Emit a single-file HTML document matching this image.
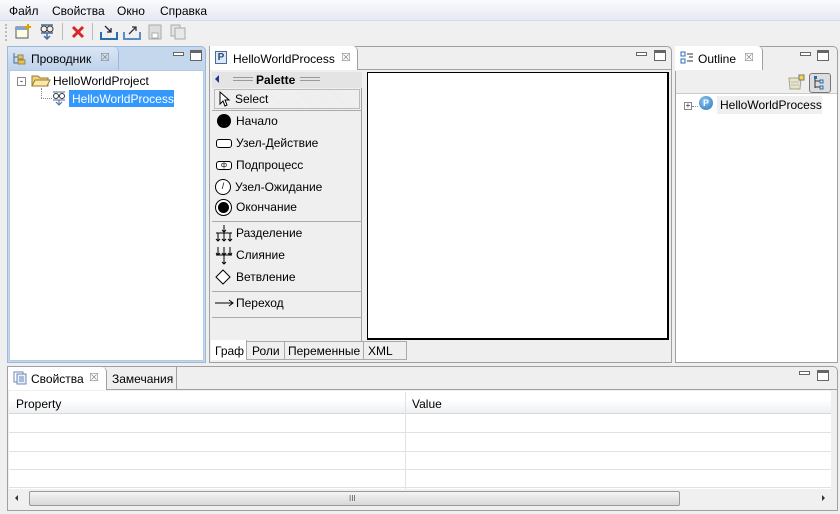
<!DOCTYPE html>
<html><head><meta charset="utf-8">
<style>
*{box-sizing:border-box;margin:0;padding:0}
body{width:840px;height:514px;background:#efefef;font-family:"Liberation Sans","DejaVu Sans",sans-serif;font-size:12px;color:#000;position:relative;overflow:hidden}
.a{position:absolute}
.menu{left:0;top:0;width:840px;height:21px;background:linear-gradient(#fafbfd,#e6e9f2);border-bottom:1px solid #d8dce6}
.menu span{position:absolute;top:4px}
.tb{left:0;top:21px;width:840px;height:22px;background:#f0f0f0}
.panel{border:1px solid #a0a0a0;border-radius:0 5px 0 0;background:#efefef}
.tab{background:#fff;border:1px solid #a0a0a0;border-bottom:none;border-radius:0 5px 0 0;height:24px;padding:5px 0 0 0}
.min{width:11px;height:4px;border:1px solid #666;background:#fff}
.max{width:12px;height:11px;border:1px solid #666;border-top-width:3px;background:#fff}
.x{color:#888;font-size:11px}
.pal div{position:absolute;left:4px}
.row{position:absolute;left:1px;width:828px;height:1px;background:#e2e2e2}
</style></head><body>
<div class="a menu"><span style="left:9px">Файл</span><span style="left:52px">Свойства</span><span style="left:117px">Окно</span><span style="left:160px">Справка</span></div>
<div class="a tb">
 <div class="a" style="left:5px;top:3px;width:2px;height:17px;border-left:2px dotted #bbb"></div>
 <svg class="a" style="left:14px;top:2px" width="20" height="18"><rect x="2" y="4" width="12" height="11" fill="#fffbe0" stroke="#556"/><rect x="2" y="4" width="12" height="3" fill="#7aa6d8"/><path d="M14 1v6M11 4h6" stroke="#e0a000" stroke-width="2"/></svg>
 <svg class="a" style="left:39px;top:2px" width="16" height="18"><circle cx="5" cy="6" r="3" fill="none" stroke="#333"/><circle cx="11" cy="6" r="3" fill="none" stroke="#333"/><path d="M2 2h12M2 10h12M8 10v5M5 13l3 3 3-3" stroke="#4a6a9a" stroke-width="1.5" fill="none"/></svg>
 <div class="a" style="left:62px;top:2px;width:1px;height:17px;background:#bbb"></div>
 <svg class="a" style="left:71px;top:4px" width="14" height="14"><path d="M2 2l10 10M12 2L2 12" stroke="#d8262a" stroke-width="3"/></svg>
 <div class="a" style="left:92px;top:2px;width:1px;height:17px;background:#bbb"></div>
 <svg class="a" style="left:100px;top:3px" width="18" height="16"><path d="M1 8v7h16V8" fill="none" stroke="#2a6cb0" stroke-width="2"/><path d="M5 2l6 6M11 4v4H7" stroke="#224" fill="none" stroke-width="1.3"/></svg>
 <svg class="a" style="left:123px;top:3px" width="18" height="16"><path d="M1 8v7h16V8" fill="none" stroke="#5a8cc8" stroke-width="2"/><path d="M6 10l7-7M9 3h4v4" stroke="#334" fill="none" stroke-width="1.3"/></svg>
 <svg class="a" style="left:147px;top:3px" width="16" height="16"><rect x="2" y="1" width="12" height="14" fill="#ddd" stroke="#aaa"/><rect x="5" y="9" width="6" height="5" fill="#fff" stroke="#aaa"/></svg>
 <svg class="a" style="left:170px;top:3px" width="16" height="16"><rect x="1" y="1" width="9" height="11" fill="#e4e4e4" stroke="#aaa"/><rect x="5" y="4" width="10" height="11" fill="#e8e8e8" stroke="#aaa"/></svg>
</div>

<!-- left panel -->
<div class="a" style="left:7px;top:46px;width:199px;height:317px;border:1px solid #9db8d8;border-radius:0 5px 0 0;background:#c5d7ec"></div>
<div class="a" style="left:8px;top:47px;width:111px;height:23px;background:linear-gradient(#d9e6f5,#c0d3eb);border-right:1px solid #9db8d8;border-radius:0 5px 0 0"></div>
<svg class="a" style="left:12px;top:52px" width="16" height="14"><path d="M2 1v10h4M2 5h4" stroke="#4a6a9a" fill="none"/><rect x="6" y="3" width="5" height="4" fill="#f0c040" stroke="#886"/><rect x="6" y="8" width="7" height="4" fill="#f0c040" stroke="#886"/></svg>
<div class="a" style="left:31px;top:52px">Проводник</div>
<div class="a x" style="left:100px;top:51px">&#x2612;</div>
<div class="a min" style="left:173px;top:52px"></div><div class="a max" style="left:190px;top:50px"></div>
<div class="a" style="left:9px;top:70px;width:195px;height:291px;background:#fff;border:1px solid #b4cae4"></div>
<div class="a" style="left:17px;top:77px;width:9px;height:9px;border:1px solid #888;background:#fff;font-size:9px;line-height:6px;text-align:center">-</div>
<svg class="a" style="left:31px;top:73px" width="20" height="14"><path d="M1 3h6l2 2h8v8H1z" fill="#f2d27a" stroke="#997a30"/><path d="M4 7h15l-3 6H1z" fill="#fbe8a8" stroke="#997a30"/></svg>
<div class="a" style="left:53px;top:74px">HelloWorldProject</div>
<div class="a" style="left:41px;top:88px;width:1px;height:10px;border-left:1px dotted #888"></div>
<div class="a" style="left:41px;top:98px;width:11px;border-top:1px dotted #888"></div>
<svg class="a" style="left:52px;top:91px" width="14" height="15"><circle cx="4" cy="5" r="2.5" fill="none" stroke="#333"/><circle cx="10" cy="5" r="2.5" fill="none" stroke="#333"/><path d="M1 1h12M1 9h12M7 9v4M4 11l3 3 3-3" stroke="#4a6a9a" fill="none"/></svg>
<div class="a" style="left:69px;top:90px;width:105px;height:17px;background:#3399ff"></div>
<div class="a" style="left:72px;top:92px;color:#fff">HelloWorldProcess</div>

<!-- editor -->
<div class="a panel" style="left:209px;top:46px;width:463px;height:317px"></div>
<div class="a" style="left:210px;top:69px;width:461px;height:1px;background:#a0a0a0"></div>
<div class="a tab" style="left:210px;top:46px;width:148px;border-left:none;border-top:none;height:24px"></div>
<div class="a" style="left:215px;top:51px;width:12px;height:13px;border:1px solid #4a6a9a;background:#dde8f5;font-size:10px;font-weight:bold;color:#2a4a7a;text-align:center;line-height:11px">P</div>
<div class="a" style="left:233px;top:52px">HelloWorldProcess</div>
<div class="a x" style="left:341px;top:51px">&#x2612;</div>
<div class="a min" style="left:636px;top:52px"></div><div class="a max" style="left:654px;top:50px"></div>
<!-- palette -->
<div class="a" style="left:212px;top:72px;width:150px;height:269px;background:#efefef;border-right:1px solid #a0a0a0"></div>
<div class="a" style="left:212px;top:72px;width:150px;height:16px;background:#e4e4e4"></div>
<div class="a" style="left:215px;top:75px;width:0;height:0;border:4px solid transparent;border-right:4px solid #1a3a8a;border-left:none"></div>
<div class="a" style="left:233px;top:77px;width:20px;height:4px;border-top:1px solid #999;border-bottom:1px solid #999"></div>
<div class="a" style="left:256px;top:73px;font-weight:bold">Palette</div>
<div class="a" style="left:300px;top:77px;width:20px;height:4px;border-top:1px solid #999;border-bottom:1px solid #999"></div>
<div class="a" style="left:214px;top:89px;width:146px;height:20px;border:1px solid #bbb;background:repeating-linear-gradient(45deg,#eaeaea 0 1px,#f4f4f4 1px 2px)"></div>
<svg class="a" style="left:219px;top:91px" width="12" height="16"><path d="M1 1v12l3-3 2 5 2-1-2-5h4z" fill="#fff" stroke="#000"/></svg>
<div class="a" style="left:235px;top:92px">Select</div>
<div class="a" style="left:212px;top:110px;width:150px;height:1px;background:#aaa"></div>
<div class="a" style="left:217px;top:114px;width:14px;height:14px;border-radius:50%;background:#000"></div>
<div class="a" style="left:236px;top:114px">Начало</div>
<div class="a" style="left:216px;top:139px;width:16px;height:9px;border:1px solid #000;border-radius:3px;background:#fff"></div>
<div class="a" style="left:236px;top:136px">Узел-Действие</div>
<div class="a" style="left:216px;top:161px;width:16px;height:9px;border:1px solid #000;border-radius:3px;background:#fff;font-size:7px;line-height:7px;text-align:center">ф</div>
<div class="a" style="left:236px;top:158px">Подпроцесс</div>
<div class="a" style="left:215px;top:179px;width:16px;height:16px;border:1px solid #000;border-radius:50%;background:#fff;font-size:9px;line-height:13px;text-align:center">/</div>
<div class="a" style="left:235px;top:180px">Узел-Ожидание</div>
<div class="a" style="left:215px;top:199px;width:17px;height:17px;border:1px solid #000;border-radius:50%;background:#fff"></div>
<div class="a" style="left:218px;top:202px;width:11px;height:11px;border-radius:50%;background:#000"></div>
<div class="a" style="left:236px;top:200px">Окончание</div>
<div class="a" style="left:212px;top:221px;width:150px;height:1px;background:#aaa"></div>
<svg class="a" style="left:215px;top:224px" width="18" height="20"><path d="M9 1v8M1 9h16M3 9v8M9 9v8M15 9v8M1 15l2 2 2-2M7 15l2 2 2-2M13 15l2 2 2-2M7 6l2 2 2-2" stroke="#000" fill="none"/></svg>
<div class="a" style="left:236px;top:226px">Разделение</div>
<svg class="a" style="left:215px;top:246px" width="18" height="20"><path d="M3 1v8M9 1v8M15 1v8M1 9h16M9 9v9M1 7l2 2 2-2M7 7l2 2 2-2M13 7l2 2 2-2M7 16l2 2 2-2" stroke="#000" fill="none"/></svg>
<div class="a" style="left:236px;top:248px">Слияние</div>
<svg class="a" style="left:215px;top:269px" width="16" height="16"><path d="M8 1l7 7-7 7-7-7z" fill="#fff" stroke="#000"/></svg>
<div class="a" style="left:236px;top:270px">Ветвление</div>
<div class="a" style="left:212px;top:291px;width:150px;height:1px;background:#aaa"></div>
<svg class="a" style="left:215px;top:298px" width="20" height="10"><path d="M0 5h18M14 2l4 3-4 3" stroke="#000" fill="none"/></svg>
<div class="a" style="left:236px;top:296px">Переход</div>
<div class="a" style="left:212px;top:317px;width:150px;height:1px;background:#aaa"></div>
<!-- canvas -->
<div class="a" style="left:367px;top:72px;width:302px;height:268px;border:2px solid #000;border-width:1px 2px 2px 1px;background:#fff"></div>
<!-- bottom tabs -->
<div class="a" style="left:211px;top:341px;width:196px;height:19px;border:1px solid #aaa;background:#efefef"></div>
<div class="a" style="left:211px;top:340px;width:36px;height:20px;background:#fff;border-right:1px solid #aaa"></div>
<div class="a" style="left:215px;top:344px">Граф</div>
<div class="a" style="left:284px;top:341px;width:1px;height:19px;background:#aaa"></div>
<div class="a" style="left:252px;top:344px">Роли</div>
<div class="a" style="left:288px;top:344px">Переменные</div>
<div class="a" style="left:363px;top:341px;width:1px;height:19px;background:#aaa"></div>
<div class="a" style="left:368px;top:344px">XML</div>

<!-- outline -->
<div class="a panel" style="left:675px;top:46px;width:163px;height:317px"></div>
<div class="a tab" style="left:675px;top:46px;width:88px;border-top:none;border-left:none;height:25px"></div>
<svg class="a" style="left:680px;top:51px" width="14" height="14"><rect x="1" y="1" width="4" height="4" fill="none" stroke="#2a6cb0"/><rect x="1" y="8" width="4" height="4" fill="none" stroke="#2a6cb0"/><path d="M7 3h6M7 10h6M9 6h4" stroke="#333"/></svg>
<div class="a" style="left:698px;top:52px">Outline</div>
<div class="a x" style="left:744px;top:51px">&#x2612;</div>
<div class="a min" style="left:800px;top:52px"></div><div class="a max" style="left:817px;top:50px"></div>
<div class="a" style="left:676px;top:70px;width:161px;height:292px;background:#fff"></div>
<div class="a" style="left:676px;top:70px;width:161px;height:24px;background:#efefef;border-bottom:1px solid #ccc"></div>
<svg class="a" style="left:787px;top:74px" width="18" height="17"><path d="M2 4h12l-1 11H3z" fill="#e8e4c8" stroke="#a9a488"/><path d="M4 8h8M4 11h8" stroke="#bbb"/><rect x="12" y="1" width="5" height="5" fill="#f7d44a" stroke="#777"/></svg>
<div class="a" style="left:809px;top:73px;width:22px;height:20px;border:1px solid #777;border-radius:3px;background:#ddd"></div>
<svg class="a" style="left:813px;top:76px" width="14" height="14"><path d="M2 1v11M2 5h5M2 11h5" stroke="#333" fill="none"/><rect x="1" y="0" width="3" height="3" fill="#2a6cb0"/><rect x="7" y="4" width="3" height="3" fill="none" stroke="#2a6cb0"/><rect x="7" y="10" width="3" height="3" fill="none" stroke="#2a6cb0"/></svg>
<div class="a" style="left:684px;top:102px;width:8px;height:8px;border:1px solid #888;font-size:8px;line-height:6px;text-align:center;color:#224">+</div>
<div class="a" style="left:692px;top:106px;width:6px;border-top:1px dotted #888"></div>
<div class="a" style="left:699px;top:96px;width:14px;height:14px;border-radius:50%;background:radial-gradient(circle at 40% 35%,#8cc4ee,#2a78c0);color:#fff;font-size:9px;font-weight:bold;text-align:center;line-height:14px">P</div>
<div class="a" style="left:717px;top:96px;width:105px;height:18px;background:#efefef"></div>
<div class="a" style="left:720px;top:98px">HelloWorldProcess</div>

<!-- bottom panel -->
<div class="a panel" style="left:7px;top:366px;width:831px;height:145px"></div>
<div class="a" style="left:8px;top:389px;width:829px;height:1px;background:#a0a0a0"></div>
<div class="a tab" style="left:8px;top:367px;width:99px;border-left:none;border-top:none;height:23px"></div>
<svg class="a" style="left:13px;top:371px" width="14" height="14"><rect x="1" y="1" width="9" height="10" fill="#fff" stroke="#6a8ab8"/><rect x="4" y="3" width="9" height="10" fill="#e8f0fa" stroke="#6a8ab8"/><path d="M6 6h5M6 8h5M6 10h5" stroke="#6a8ab8"/></svg>
<div class="a" style="left:31px;top:372px">Свойства</div>
<div class="a x" style="left:89px;top:371px">&#x2612;</div>
<div class="a" style="left:176px;top:367px;width:1px;height:22px;background:#a0a0a0"></div>
<div class="a" style="left:112px;top:372px">Замечания</div>
<div class="a min" style="left:799px;top:371px"></div><div class="a max" style="left:817px;top:370px"></div>
<div class="a" style="left:9px;top:391px;width:822px;height:100px;background:#fff"></div>
<div class="a" style="left:9px;top:392px;width:822px;height:22px;background:linear-gradient(#fff 40%,#eef0f3);border-bottom:1px solid #d8d8d8"></div>
<div class="a" style="left:16px;top:397px">Property</div>
<div class="a" style="left:405px;top:392px;width:1px;height:98px;background:#e2e2e2"></div>
<div class="a" style="left:412px;top:397px">Value</div>
<div class="a" style="left:9px;top:432px;width:822px;height:1px;background:#e2e2e2"></div>
<div class="a" style="left:9px;top:451px;width:822px;height:1px;background:#e2e2e2"></div>
<div class="a" style="left:9px;top:469px;width:822px;height:1px;background:#e2e2e2"></div>
<div class="a" style="left:9px;top:487px;width:822px;height:1px;background:#e2e2e2"></div>
<div class="a" style="left:9px;top:489px;width:822px;height:19px;background:#f0f0f0"></div>
<div class="a" style="left:15px;top:495px;width:0;height:0;border:3px solid transparent;border-right:3px solid #333;border-left:none"></div>
<div class="a" style="left:29px;top:491px;width:651px;height:15px;border:1px solid #999;border-radius:2px;background:linear-gradient(#f4f4f4,#d8d8d8)"></div>
<div class="a" style="left:349px;top:494px;font-size:8px;color:#555">III</div>
<div class="a" style="left:822px;top:495px;width:0;height:0;border:3px solid transparent;border-left:3px solid #333;border-right:none"></div>
</body></html>
